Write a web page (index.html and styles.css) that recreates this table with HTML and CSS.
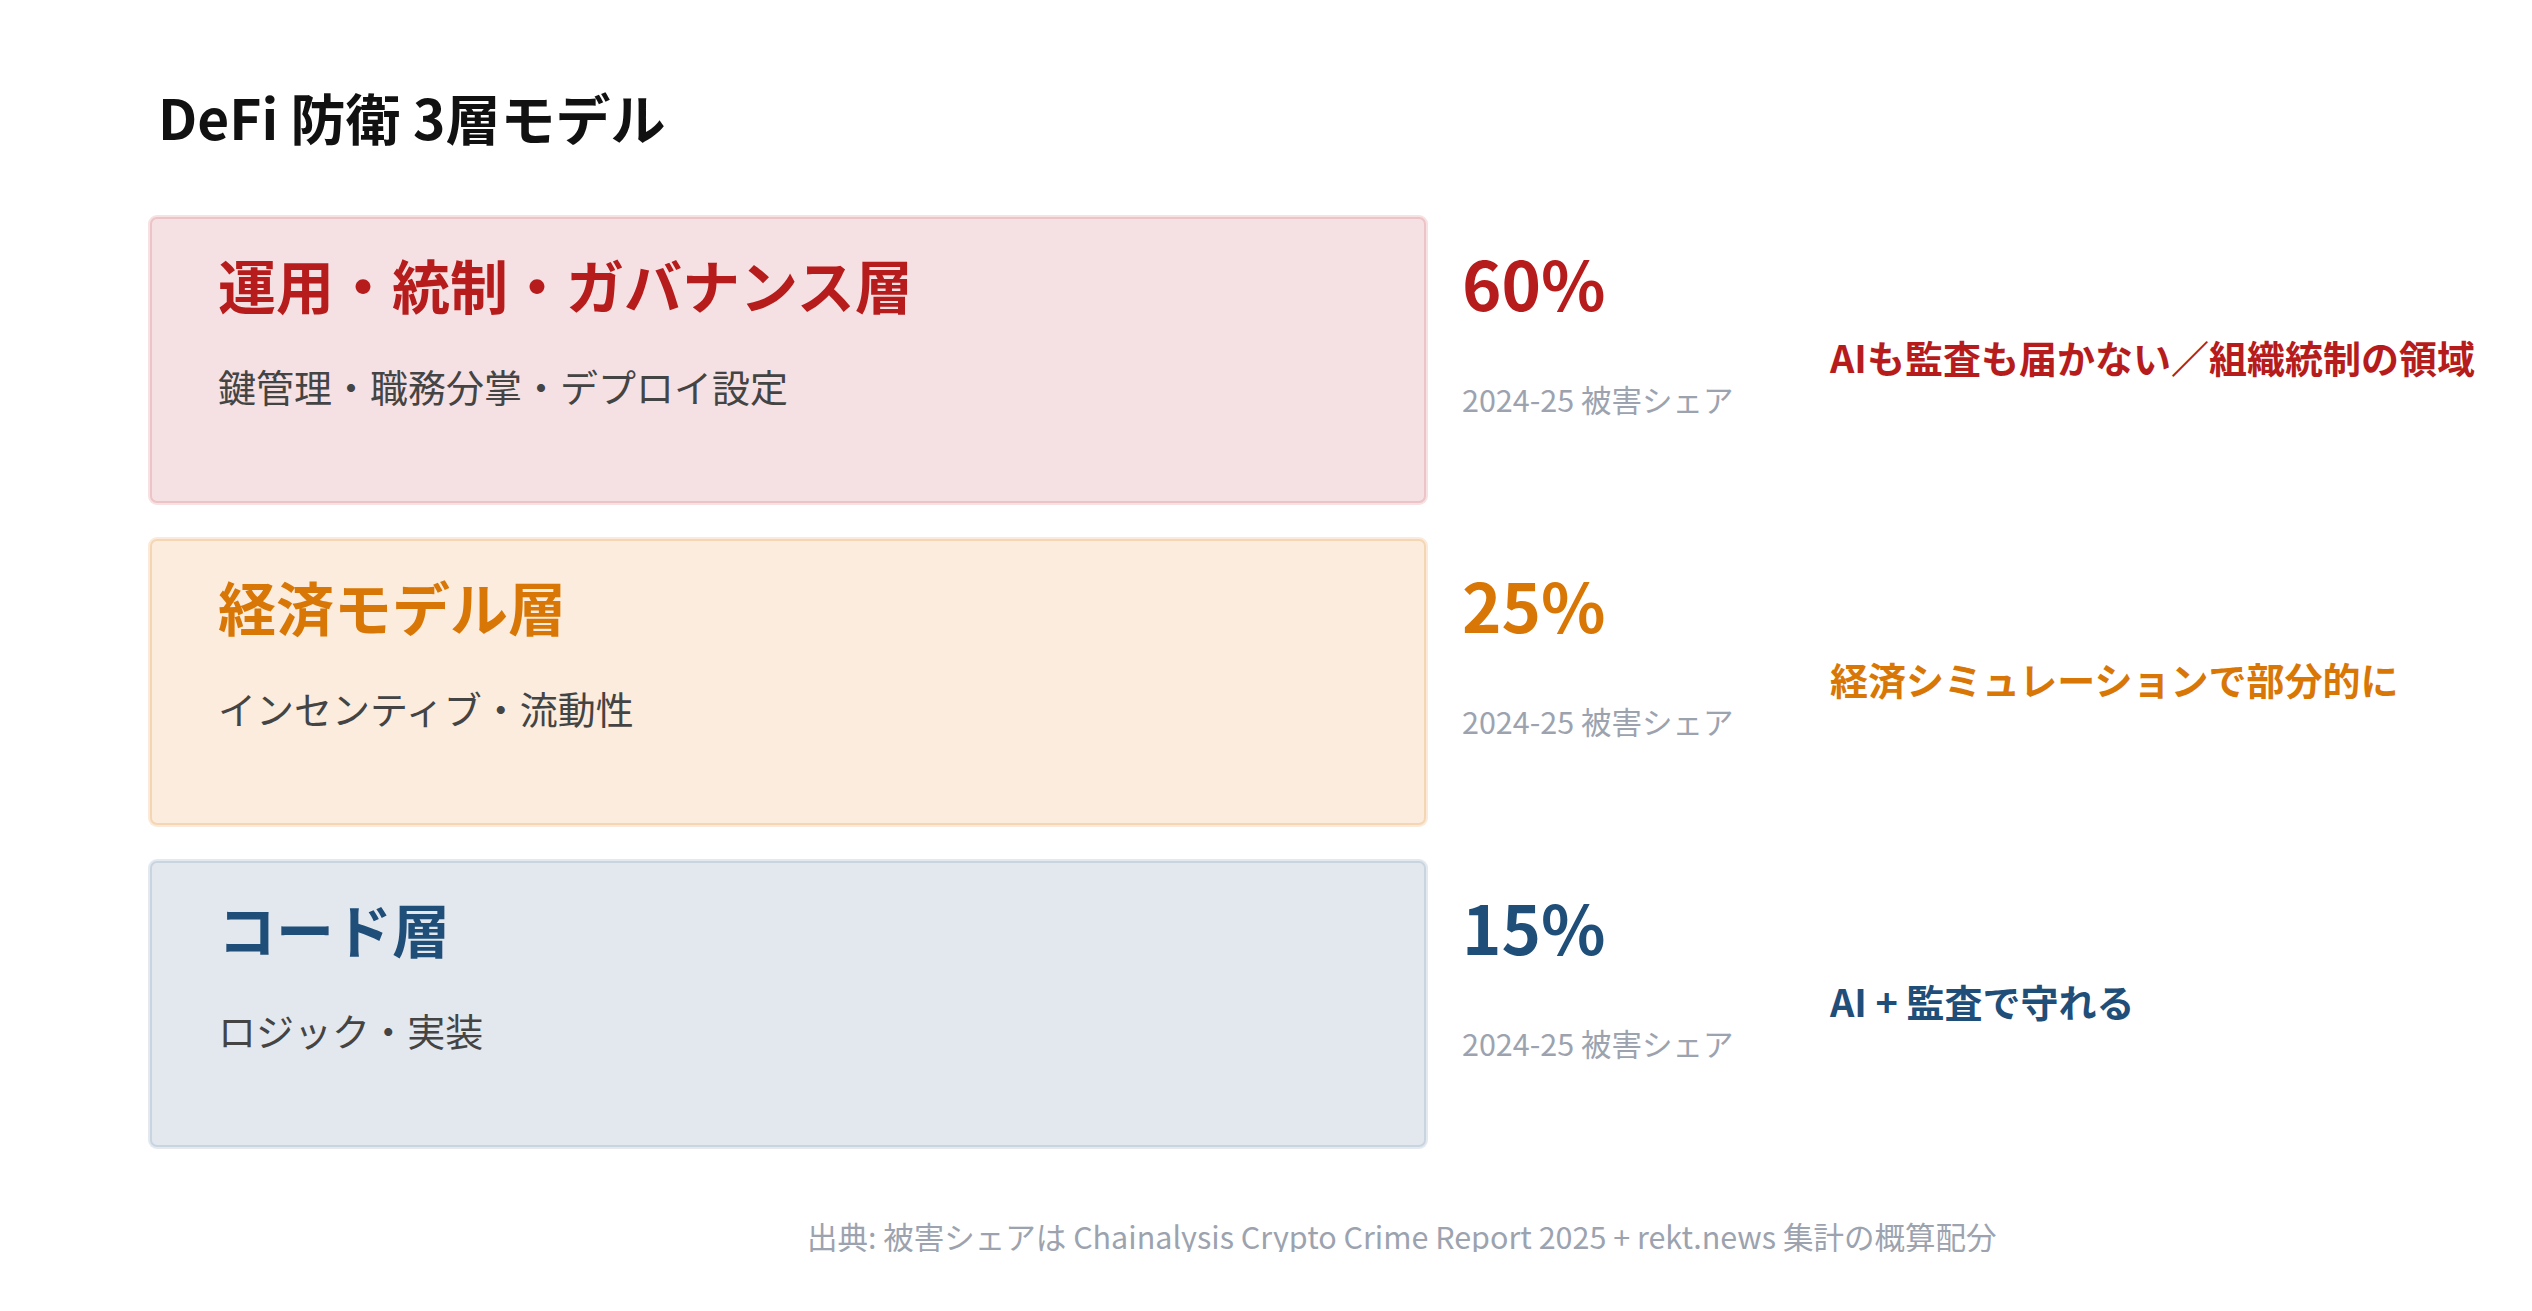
FILE: index.html
```html
<!DOCTYPE html>
<html lang="ja">
<head>
<meta charset="utf-8">
<title>DeFi 防衛 3層モデル</title>
<link rel="stylesheet" href="styles.css">
</head>
<body>
<main class="page">
  <h1 class="page-title">DeFi 防衛 3層モデル</h1>
  <section class="layers">
    <div class="layer layer-red">
      <div class="card">
        <h2 class="card-title">運用・統制・ガバナンス層</h2>
        <p class="card-sub">鍵管理・職務分掌・デプロイ設定</p>
      </div>
      <div class="stat">
        <div class="stat-num">60%</div>
        <div class="stat-label">2024-25 被害シェア</div>
      </div>
      <div class="desc">AIも監査も届かない／組織統制の領域</div>
    </div>
    <div class="layer layer-orange">
      <div class="card">
        <h2 class="card-title">経済モデル層</h2>
        <p class="card-sub">インセンティブ・流動性</p>
      </div>
      <div class="stat">
        <div class="stat-num">25%</div>
        <div class="stat-label">2024-25 被害シェア</div>
      </div>
      <div class="desc">経済シミュレーションで部分的に</div>
    </div>
    <div class="layer layer-blue">
      <div class="card">
        <h2 class="card-title">コード層</h2>
        <p class="card-sub">ロジック・実装</p>
      </div>
      <div class="stat">
        <div class="stat-num">15%</div>
        <div class="stat-label">2024-25 被害シェア</div>
      </div>
      <div class="desc">AI + 監査で守れる</div>
    </div>
  </section>
  <p class="source">出典: 被害シェアは Chainalysis Crypto Crime Report 2025 + rekt.news 集計の概算配分</p>
</main>
</body>
</html>
```

FILE: styles.css
```css
html, body {
  margin: 0;
  padding: 0;
  background: #ffffff;
}

body {
  font-family: "Noto Sans CJK JP", "Noto Sans", sans-serif;
  color: #222;
}

.page {
  padding: 89px 0 0 150px;
}

.page-title {
  margin: 0 0 0 8px;
  font-size: 55px;
  line-height: 1;
  font-weight: 700;
  color: #111111;
}

.layers {
  margin-top: 73px;
  display: flex;
  flex-direction: column;
  gap: 36px;
}

.layer {
  display: grid;
  grid-template-columns: 1276px 404px auto;
  align-items: stretch;
}

.card {
  box-sizing: border-box;
  height: 286px;
  border-radius: 7px;
  border: 2px solid;
  padding: 36px 0 0 66px;
}

.card-title {
  margin: 0;
  font-size: 58px;
  line-height: 1;
  font-weight: 700;
}

.card-sub {
  margin: 54px 0 0;
  font-size: 38px;
  line-height: 1;
  font-weight: 400;
  color: #444444;
}

.stat {
  padding: 31px 0 0 36px;
}

.stat-num {
  font-size: 67px;
  line-height: 1;
  font-weight: 700;
}

.stat-label {
  margin-top: 69px;
  font-size: 30.5px;
  line-height: 1;
  color: #9ca3af;
}

.desc {
  align-self: center;
  font-size: 38px;
  line-height: 1.2;
  font-weight: 700;
  white-space: nowrap;
  margin-top: -6px;
}

.layer-red .card {
  background: #f5e1e3;
  border-color: #ecc3c6;
  box-shadow: 0 0 0 2px #f7e1e2;
}
.layer-red .card-title,
.layer-red .stat-num,
.layer-red .desc {
  color: #b71c1c;
}

.layer-orange .card {
  background: #fbecdd;
  border-color: #f5d6b3;
  box-shadow: 0 0 0 2px #fbeadb;
}
.layer-orange .card-title,
.layer-orange .stat-num,
.layer-orange .desc {
  color: #d97706;
}

.layer-blue .card {
  background: #e3e8ee;
  border-color: #c8d4e0;
  box-shadow: 0 0 0 2px #e3e9ef;
}
.layer-blue .card-title,
.layer-blue .stat-num,
.layer-blue .desc {
  color: #1f4e79;
}

.source {
  margin: 74px 0 0 657px;
  font-size: 30.5px;
  line-height: 1;
  color: #9ca3af;
  white-space: nowrap;
}
```
